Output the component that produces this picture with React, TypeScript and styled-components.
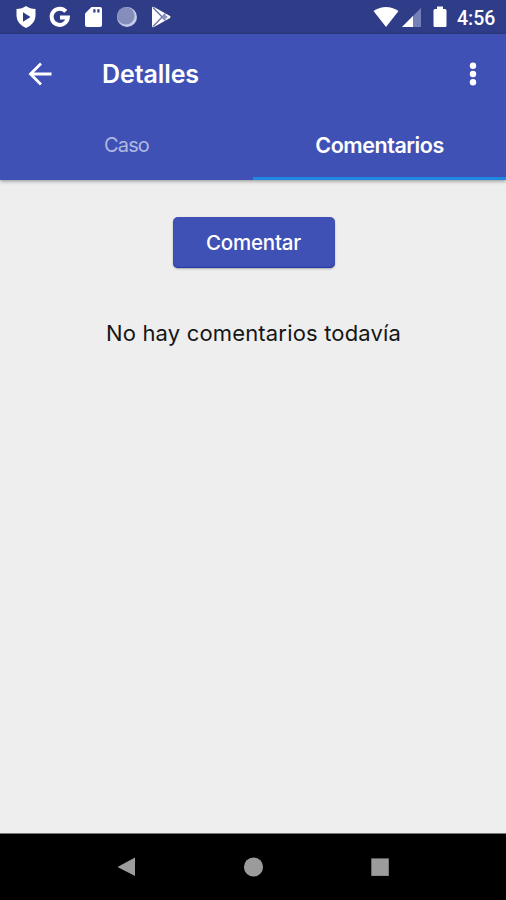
import React from 'react';
import styled, { createGlobalStyle } from 'styled-components';

const GlobalStyle = createGlobalStyle`
  * { box-sizing: border-box; }
  body { margin: 0; background: #eee; font-family: Inter, "Liberation Sans", sans-serif; }
  svg { display: block; flex: none; }
`;

const Screen = styled.div`
  width: 506px;
  height: 900px;
  display: flex;
  flex-direction: column;
  background: #eeeeee;
  overflow: hidden;
`;

const StatusBar = styled.div`
  height: 34px;
  flex: none;
  display: flex;
  justify-content: space-between;
  align-items: center;
  padding: 0 10px 0 14px;
  background: #2f3d89;
  color: #fff;
`;

const Notifications = styled.div`
  display: flex;
  gap: 9.75px;
`;

const SystemIcons = styled.div`
  display: flex;
  align-items: center;
`;

const Battery = styled.svg`
  margin: 0 10px 0 11px;
`;

const Clock = styled.span`
  width: 39px;
  padding-top: 3px;
  font: 500 19.5px/24px Roboto, sans-serif;
  white-space: nowrap;
`;

const Header = styled.header`
  height: 146px;
  flex: none;
  display: flex;
  flex-direction: column;
  background: #3f51b5;
  color: #fff;
  box-shadow: 0 1px 4px rgba(0, 0, 0, 0.42);
`;

const Toolbar = styled.div`
  height: 79px;
  display: flex;
  align-items: center;
  padding: 0 16px 0 23px;
`;

const IconButton = styled.button`
  padding: 0;
  border: 0;
  background: none;
  color: inherit;
`;

const Title = styled.h1`
  flex: 1;
  margin: 1px 0 0 45px;
  font-size: 25px;
  line-height: 32px;
  font-weight: 600;
  letter-spacing: -0.1px;
`;

const Tabs = styled.nav`
  height: 67px;
  display: flex;
`;

const Tab = styled.button<{ $active?: boolean }>`
  flex: 1;
  padding: 0 0 1px;
  border: 0;
  border-bottom: 3px solid ${p => (p.$active ? '#1e88e5' : 'transparent')};
  background: none;
  font-family: inherit;
  font-size: ${p => (p.$active ? '21.5px' : '20px')};
  font-weight: ${p => (p.$active ? 600 : 400)};
  letter-spacing: ${p => (p.$active ? '-0.45px' : '-0.9px')};
  color: ${p => (p.$active ? '#fff' : '#b0b8e2')};
`;

const Content = styled.main`
  flex: 1;
  display: flex;
  flex-direction: column;
  align-items: center;
  padding: 37px 0 0 1px;
`;

const CommentButton = styled.button`
  width: 162px;
  height: 51px;
  padding: 0;
  border: 0;
  border-radius: 5px;
  background: #3f51b5;
  box-shadow: inset 0 -1px 1px #2638a5, 0 1px 2px rgba(0, 0, 0, 0.3);
  color: #fff;
  font-family: inherit;
  font-size: 20.5px;
  font-weight: 500;
  letter-spacing: -0.2px;
`;

const EmptyMessage = styled.p`
  margin: 49px 0 0;
  font-size: 22px;
  line-height: 32px;
  letter-spacing: 0.17px;
  color: #161616;
  white-space: nowrap;
`;

const NavigationBar = styled.footer`
  height: 67px;
  flex: none;
  display: flex;
  justify-content: center;
  align-items: center;
  gap: 102px;
  border-top: 1px solid #777;
  background: #000;
  color: #9b9b9b;
`;

export default function App() {
  return (
    <>
      <GlobalStyle />
      <Screen>
        <StatusBar>
          <Notifications>
            <svg width="24" height="24" viewBox="0 0 24 24">
              <path fill="#fff" d="M12 1 Q16 4 21.5 4 V11 Q21 19 12 23 Q3 19 2.5 11 V4 Q8 4 12 1Z" />
              <path fill="#2f3d89" d="M9 7.2 16.5 12 9 16.8Z" />
            </svg>
            <svg width="24" height="24" viewBox="0 0 24 24" fill="none" stroke="#fff" strokeWidth="4">
              <path d="M17.8 6.4A8.1 8.1 0 1 0 19.8 12.6H12" />
            </svg>
            <svg width="24" height="24" viewBox="0 0 24 24">
              <path fill="#fff" d="M9.5 2H18a2 2 0 0 1 2 2v16a2 2 0 0 1-2 2H5a2 2 0 0 1-2-2V8.5Z" />
              <path stroke="#2f3d89" strokeWidth="2.2" d="M12.4 4.2v3.4M16.4 4.2v3.4" />
            </svg>
            <svg width="24" height="24" viewBox="0 0 24 24">
              <circle cx="12" cy="12" r="10" fill="#c4cae9" />
              <circle cx="10.8" cy="10.8" r="8.8" fill="#858dbb" />
            </svg>
            <svg width="24" height="24" viewBox="0 0 24 24">
              <path fill="#fff" d="M3 3q0-2 2-1L21 11q1.3 1 0 2L5 22q-2 1-2-1Z" />
              <path d="M4 2.5 16.5 15.5M4 21.5 16.5 8.5" fill="none" stroke="#6570aa" strokeWidth="1.3" />
              <path d="M13 12 15.5 9.5 19 12 15.5 14.5Z" fill="#8b94c3" />
            </svg>
          </Notifications>
          <SystemIcons>
            <svg width="28" height="24" viewBox="0 0 28 24">
              <path fill="#fff" d="M.5 6Q13-2 25.5 6L13 22Z" />
            </svg>
            <svg width="21" height="24" viewBox="0 0 21 24">
              <path fill="#7480b7" d="M20 3v19H1Z" />
              <path fill="#fff" d="M12 11V22H1Z" />
            </svg>
            <Battery width="14" height="24" viewBox="0 0 14 24">
              <path fill="#fff" d="M4 1.5h6V4h2q1.5 0 1.5 1.5v15Q13.5 22 12 22H2Q.5 22 .5 20.5v-15Q.5 4 2 4h2Z" />
            </Battery>
            <Clock>4:56</Clock>
          </SystemIcons>
        </StatusBar>
        <Header>
          <Toolbar>
            <IconButton aria-label="Volver">
              <svg width="34" height="34" viewBox="0 0 34 34" fill="none" stroke="#fff" strokeWidth="2.8">
                <path d="M28.5 17H7.5M18 6.5 7.5 17 18 27.5" />
              </svg>
            </IconButton>
            <Title>Detalles</Title>
            <IconButton aria-label="Más opciones">
              <svg width="34" height="34" viewBox="0 0 34 34" fill="#fff">
                <circle cx="17" cy="8.7" r="3.2" />
                <circle cx="17" cy="17" r="3.2" />
                <circle cx="17" cy="25.3" r="3.2" />
              </svg>
            </IconButton>
          </Toolbar>
          <Tabs>
            <Tab>Caso</Tab>
            <Tab $active>Comentarios</Tab>
          </Tabs>
        </Header>
        <Content>
          <CommentButton>Comentar</CommentButton>
          <EmptyMessage>No hay comentarios todavía</EmptyMessage>
        </Content>
        <NavigationBar>
          <svg width="24" height="24" viewBox="0 0 24 24" fill="currentColor">
            <path d="M20 2.5v18.5L2.5 12Z" />
          </svg>
          <svg width="24" height="24" viewBox="0 0 24 24" fill="currentColor">
            <circle cx="12.5" cy="12" r="9.6" />
          </svg>
          <svg width="24" height="24" viewBox="0 0 24 24" fill="currentColor">
            <path d="M4.3 3.4h17.5v17.5H4.3Z" />
          </svg>
        </NavigationBar>
      </Screen>
    </>
  );
}
